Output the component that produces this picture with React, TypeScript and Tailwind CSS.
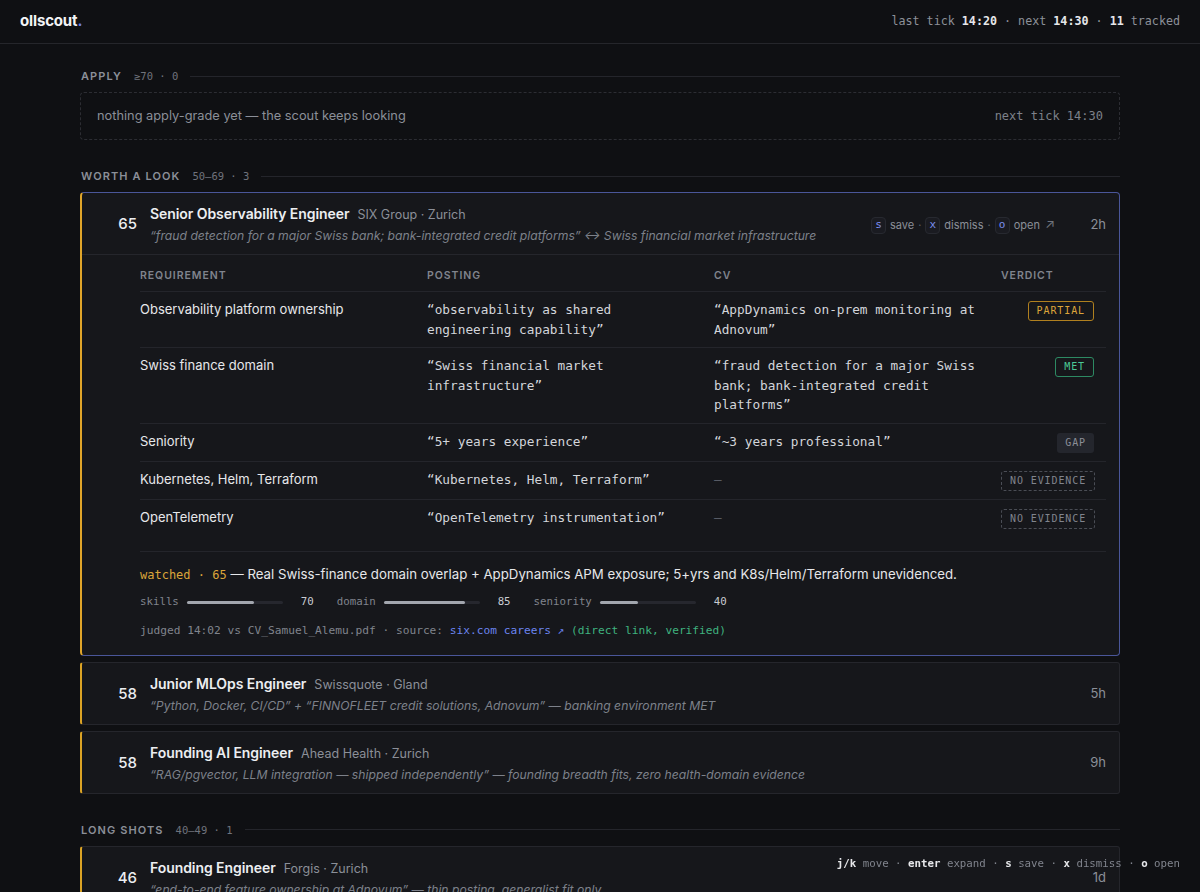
import React from 'react';

const mono = "font-['DejaVu_Sans_Mono',monospace]";

type Verdict = 'PARTIAL' | 'MET' | 'GAP' | 'NO EVIDENCE';

interface Requirement {
  name: string;
  posting: string;
  cv: string | null;
  verdict: Verdict;
}

interface Job {
  score: number;
  title: string;
  company: string;
  quote: string;
  age: string;
}

const requirements: Requirement[] = [
  {
    name: 'Observability platform ownership',
    posting: '“observability as shared engineering capability”',
    cv: '“AppDynamics on-prem monitoring at Adnovum”',
    verdict: 'PARTIAL',
  },
  {
    name: 'Swiss finance domain',
    posting: '“Swiss financial market infrastructure”',
    cv: '“fraud detection for a major Swiss bank; bank-integrated credit platforms”',
    verdict: 'MET',
  },
  { name: 'Seniority', posting: '“5+ years experience”', cv: '“~3 years professional”', verdict: 'GAP' },
  { name: 'Kubernetes, Helm, Terraform', posting: '“Kubernetes, Helm, Terraform”', cv: null, verdict: 'NO EVIDENCE' },
  { name: 'OpenTelemetry', posting: '“OpenTelemetry instrumentation”', cv: null, verdict: 'NO EVIDENCE' },
];

const worthALook: Job[] = [
  {
    score: 58,
    title: 'Junior MLOps Engineer',
    company: 'Swissquote · Gland',
    quote: '“Python, Docker, CI/CD” + “FINNOFLEET credit solutions, Adnovum” — banking environment MET',
    age: '5h',
  },
  {
    score: 58,
    title: 'Founding AI Engineer',
    company: 'Ahead Health · Zurich',
    quote: '“RAG/pgvector, LLM integration — shipped independently” — founding breadth fits, zero health-domain evidence',
    age: '9h',
  },
];

const longShots: Job[] = [
  {
    score: 46,
    title: 'Founding Engineer',
    company: 'Forgis · Zurich',
    quote: '“end-to-end feature ownership at Adnovum” — thin posting, generalist fit only',
    age: '1d',
  },
];

const scores = [
  { label: 'skills', value: 70 },
  { label: 'domain', value: 85 },
  { label: 'seniority', value: 40 },
];

function SectionHeader({ title, range, count }: { title: string; range: string; count: number }) {
  return (
    <div className="flex items-center gap-3 mb-2 h-4 pl-px">
      <span className="text-[11px] font-semibold tracking-[0.1em] text-[#8b8f98] leading-4">{title}</span>
      <span className={`${mono} text-[10.5px] text-[#6f737c] leading-4`}>
        {range} · {count}
      </span>
      <div className="flex-1 h-px bg-[#24252b]" />
    </div>
  );
}

function VerdictBadge({ verdict }: { verdict: Verdict }) {
  const base = `${mono} h-[20px] px-2 flex items-center whitespace-nowrap rounded-[3px] text-[10px] tracking-[0.09em] mt-[1px]`;
  if (verdict === 'PARTIAL') {
    return <span className={`${base} border border-[#b0801f] text-[#dca53a]`}>PARTIAL</span>;
  }
  if (verdict === 'MET') {
    return <span className={`${base} border border-[#2d8a63] text-[#4cc996]`}>MET</span>;
  }
  if (verdict === 'GAP') {
    return <span className={`${base} bg-[#24262d] text-[#8b8f98]`}>GAP</span>;
  }
  return <span className={`${base} border border-dashed border-[#4a4d55] text-[#80848d]`}>NO EVIDENCE</span>;
}

function Kbd({ k }: { k: string }) {
  return (
    <span
      className={`${mono} w-[15px] h-[17px] flex items-center justify-center rounded-[4px] border border-[#272930] bg-[#1a1b21] text-[11px] text-[#7b8ff0]`}
    >
      {k}
    </span>
  );
}

function JobHeader({ job, actions }: { job: Job; actions?: boolean }) {
  return (
    <div className="flex items-center pt-[11px] pb-[9px] pr-[13px]">
      <div className="w-[55px] text-right text-[15px] font-medium text-[#eceef1]">{job.score}</div>
      <div className="ml-[13px] flex-1 min-w-0">
        <div className="flex items-baseline gap-2 leading-5">
          <span className="text-[14px] font-semibold tracking-[-0.005em] text-[#eceef1]">{job.title}</span>
          <span className="text-[12.5px] text-[#8b8f98]">{job.company}</span>
        </div>
        <div className="mt-[2px] text-[12.2px] italic leading-[18px] text-[#7d818a] truncate">{job.quote}</div>
      </div>
      {actions && (
        <div className="flex items-center gap-1 text-[11px] text-[#8b8f98] mr-[31px] mt-[1px]">
          <Kbd k="s" />
          <span>save</span>
          <span className="text-[#5c606a]">·</span>
          <Kbd k="x" />
          <span>dismiss</span>
          <span className="text-[#5c606a]">·</span>
          <Kbd k="o" />
          <span>open</span>
          <span className="text-[#6f737c] text-[13px] ml-px">↗</span>
        </div>
      )}
      <div className="text-[13px] text-[#8b8f98] w-[20px] text-right">{job.age}</div>
    </div>
  );
}

function ExpandedCard() {
  const job: Job = {
    score: 65,
    title: 'Senior Observability Engineer',
    company: 'SIX Group · Zurich',
    quote: '“fraud detection for a major Swiss bank; bank-integrated credit platforms” ↔ Swiss financial market infrastructure',
    age: '2h',
  };

  return (
    <div className="rounded-[4px] border border-[#4a5699] border-l-2 border-l-[#e0a52a] bg-[#16171b]">
      <div className="border-b border-[#25262c]">
        <JobHeader job={job} actions />
      </div>

      <div className="ml-[58px] mr-[13px] pt-[13px] pb-4">
        {/* table */}
        <div className="grid grid-cols-[287px_287px_287px_1fr] pr-[12px] pb-[7px] text-[10.5px] font-semibold tracking-[0.09em] leading-4 text-[#80848d]">
          <div>REQUIREMENT</div>
          <div>POSTING</div>
          <div>CV</div>
          <div>VERDICT</div>
        </div>
        {requirements.map((r) => (
          <div
            key={r.name}
            className="grid grid-cols-[287px_287px_287px_1fr] pr-[12px] py-2 border-t border-[#24252b] leading-[19.5px]"
          >
            <div className="text-[13px] text-[#e6e7ea]">{r.name}</div>
            <div className={`${mono} text-[12.75px] text-[#d3d5da] pr-3`}>{r.posting}</div>
            <div className={`${mono} text-[12.75px] pr-3 ${r.cv ? 'text-[#d3d5da]' : 'text-[#5c606a]'}`}>
              {r.cv ?? '—'}
            </div>
            <div className="flex justify-end items-start">
              <VerdictBadge verdict={r.verdict} />
            </div>
          </div>
        ))}

        {/* summary */}
        <div className="mt-[14px] border-t border-[#24252b] pt-3">
          <div className="text-[13.25px] leading-5 text-[#e6e7ea]">
            <span className={`${mono} text-[12px] text-[#dca53a]`}>watched · 65</span> — Real Swiss-finance domain
            overlap + AppDynamics APM exposure; 5+yrs and K8s/Helm/Terraform unevidenced.
          </div>
          <div className={`${mono} mt-[10px] h-4 flex items-center gap-[23px] text-[10.75px]`}>
            {scores.map((s) => (
              <div key={s.label} className="flex items-center">
                <span className="text-[#80848d]">{s.label}</span>
                <div className="ml-2 w-24 h-[3px] rounded-full bg-[#26272e]">
                  <div className="h-[3px] rounded-full bg-[#a2a6ae]" style={{ width: `${s.value}%` }} />
                </div>
                <span className="ml-[18px] text-[#c9ccd2]">{s.value}</span>
              </div>
            ))}
          </div>
          <div className={`${mono} mt-3 text-[11.2px] leading-4 text-[#80848d]`}>
            judged 14:02 vs CV_Samuel_Alemu.pdf · source: <span className="text-[#6b85f0]">six.com careers ↗</span>{' '}
            <span className="text-[#3fb27f]">(direct link, verified)</span>
          </div>
        </div>
      </div>
    </div>
  );
}

function CollapsedCard({ job }: { job: Job }) {
  return (
    <div className="rounded-[3px] border border-[#25262c] border-l-2 border-l-[#dba325] bg-[#16171b]">
      <JobHeader job={job} />
    </div>
  );
}

export default function App() {
  return (
    <div className="min-h-screen bg-[#0f1013] font-['Inter',sans-serif] text-[#e6e7ea]">
      {/* top bar */}
      <header className="h-[44px] border-b border-[#25262b] px-5 flex items-center justify-between">
        <div className="text-[15px] font-bold tracking-[-0.01em] text-[#f3f4f6]">
          ollscout<span className="text-[#6b7fe6]">.</span>
        </div>
        <div className={`${mono} text-[11.7px] text-[#8d9099]`}>
          last tick <span className="font-bold text-[#e6e7ea]">14:20</span> · next{' '}
          <span className="font-bold text-[#e6e7ea]">14:30</span> ·{' '}
          <span className="font-bold text-[#e6e7ea]">11</span> tracked
        </div>
      </header>

      <main className="w-[1040px] mx-auto pt-6 pb-10">
        <section>
          <SectionHeader title="APPLY" range="≥70" count={0} />
          <div className="rounded-[4px] border border-dashed border-[#2c2d33] px-4 py-[13px] flex items-center justify-between">
            <span className="text-[12.8px] leading-5 text-[#8b8f98]">
              nothing apply-grade yet — the scout keeps looking
            </span>
            <span className={`${mono} text-[12px] text-[#7d818a]`}>next tick 14:30</span>
          </div>
        </section>

        <section className="mt-7">
          <SectionHeader title="WORTH A LOOK" range="50–69" count={3} />
          <div className="flex flex-col gap-[6px]">
            <ExpandedCard />
            {worthALook.map((j) => (
              <CollapsedCard key={j.title} job={j} />
            ))}
          </div>
        </section>

        <section className="mt-7">
          <SectionHeader title="LONG SHOTS" range="40–49" count={1} />
          <div className="flex flex-col gap-[6px]">
            {longShots.map((j) => (
              <CollapsedCard key={j.title} job={j} />
            ))}
          </div>
        </section>
      </main>

      {/* keyboard hint */}
      <div className={`${mono} fixed bottom-5 right-5 text-[10.75px] leading-4 text-[#80848d]`}>
        <span className="font-bold text-[#e6e7ea]">j/k</span> move · <span className="font-bold text-[#e6e7ea]">enter</span>{' '}
        expand · <span className="font-bold text-[#e6e7ea]">s</span> save ·{' '}
        <span className="font-bold text-[#e6e7ea]">x</span> dismiss · <span className="font-bold text-[#e6e7ea]">o</span>{' '}
        open
      </div>
    </div>
  );
}
